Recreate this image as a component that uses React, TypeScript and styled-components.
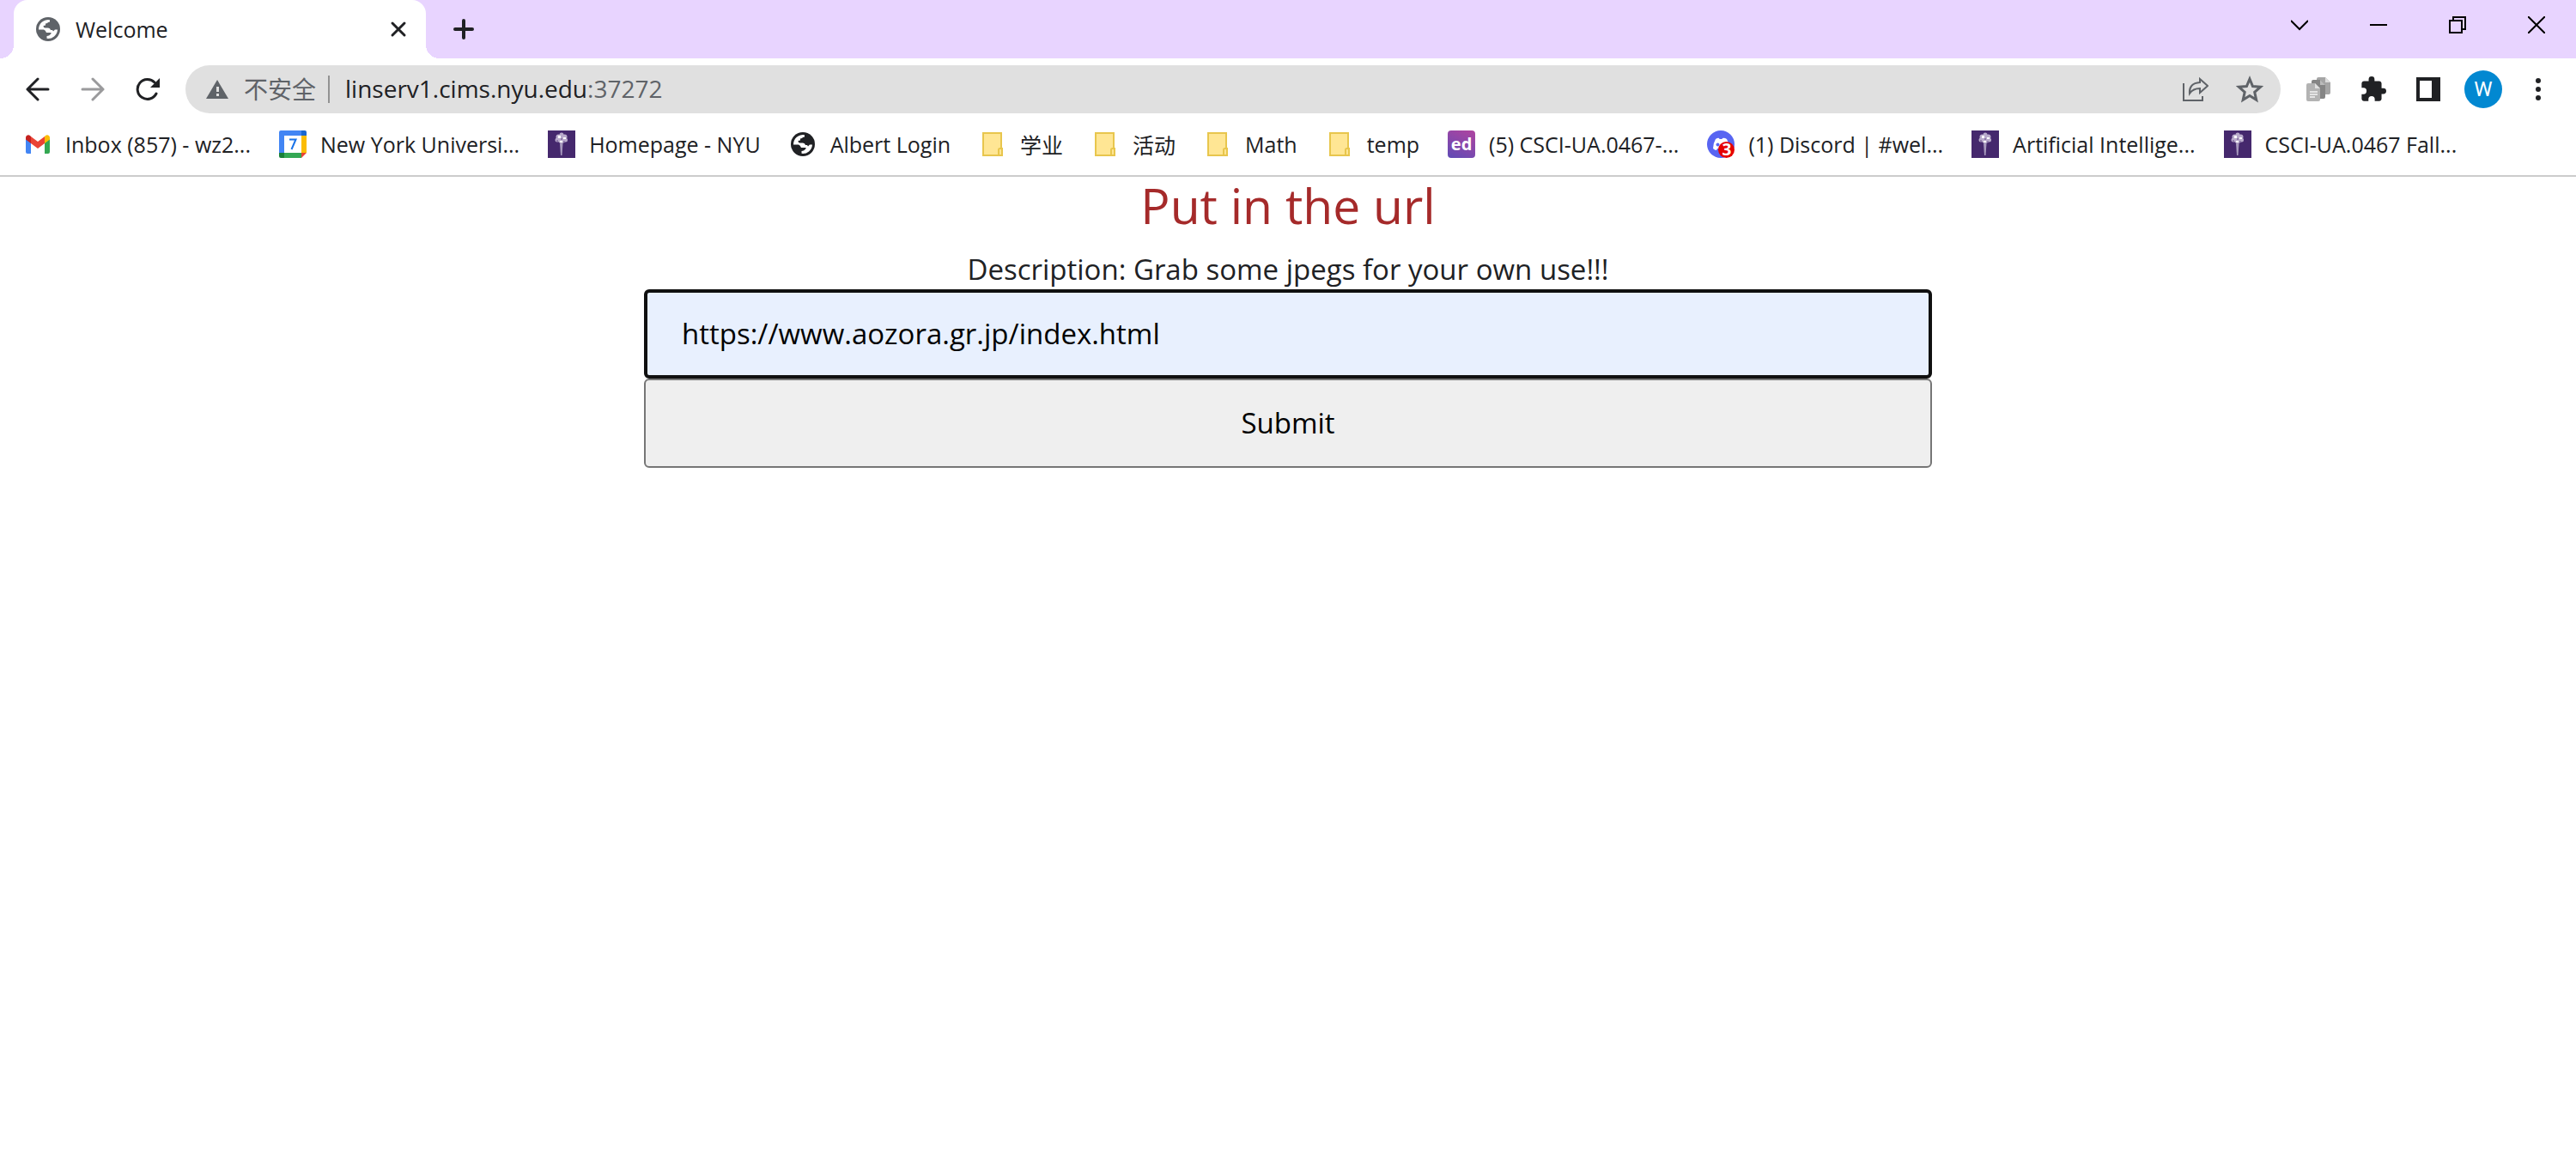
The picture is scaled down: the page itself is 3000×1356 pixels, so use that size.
import React, { useState } from "react";
import styled, { createGlobalStyle } from "styled-components";

const INK = "#202124";
const MUTED = "#5f6368";

const GlobalStyle = createGlobalStyle`
  *, *::before, *::after { box-sizing: border-box; }
  body {
    margin: 0;
    background: #fff;
    color: ${INK};
    font-family: "Open Sans", "Noto Sans CJK SC", sans-serif;
  }
  button, input { font: inherit; color: inherit; }
  svg { display: block; flex: none; }
`;

const TabStrip = styled.header`
  display: flex;
  height: 68px;
  padding-left: 16px;
  background: #e8d4ff;
`;

const Tab = styled.div`
  position: relative;
  display: flex;
  align-items: center;
  gap: 16px;
  width: 480px;
  padding: 0 22px 0 24px;
  border-radius: 16px 16px 0 0;
  background: #fff;
  font-size: 25px;

  &::before, &::after {
    content: "";
    position: absolute;
    bottom: 0;
    width: 16px;
    height: 16px;
  }
  &::before {
    right: 100%;
    background: radial-gradient(circle at 0 0, transparent 16px, #fff 16px);
  }
  &::after {
    left: 100%;
    background: radial-gradient(circle at 100% 0, transparent 16px, #fff 16px);
  }
`;

const TabTitle = styled.span`
  flex: 1;
`;

const PlainButton = styled.button`
  display: flex;
  align-items: center;
  justify-content: center;
  padding: 0;
  border: 0;
  background: none;
`;

const NewTab = styled(PlainButton)`
  width: 56px;
  margin-left: 16px;
`;

const WindowControls = styled.div`
  display: flex;
  margin-left: auto;
`;

const WindowButton = styled(PlainButton)`
  width: 92px;
  padding-bottom: 10px;
`;

const Toolbar = styled.nav`
  display: flex;
  align-items: center;
  height: 72px;
  padding: 0 12px;
`;

const NavButton = styled(PlainButton)`
  width: 64px;
  height: 56px;
`;

const AddressBar = styled.div`
  display: flex;
  flex: 1;
  align-items: center;
  height: 56px;
  margin: 0 12px;
  padding: 0 4px 0 24px;
  border-radius: 28px;
  background: #e0e0e0;
`;

const Security = styled(PlainButton)`
  gap: 18px;
  padding-right: 14px;
  border-right: 2px solid #929292;
  color: ${MUTED};
  font-size: 28px;
  line-height: 32px;
`;

const Address = styled.div`
  flex: 1;
  padding: 0 0 2px 18px;
  font-size: 28px;
`;

const Port = styled.span`
  color: ${MUTED};
`;

const Avatar = styled.span`
  display: flex;
  align-items: center;
  justify-content: center;
  width: 44px;
  height: 44px;
  border-radius: 50%;
  background: #0288d1;
  color: #fff;
  font: 24px Roboto, sans-serif;
`;

const Bookmarks = styled.nav`
  display: flex;
  gap: 33px;
  height: 66px;
  padding: 0 28px 8px;
  border-bottom: 2px solid #ccc;
`;

const Bookmark = styled.a`
  display: flex;
  align-items: center;
  gap: 16px;
  color: inherit;
  font-size: 25px;
  text-decoration: none;
  white-space: nowrap;
`;

const Page = styled.main`
  text-align: center;
`;

const Title = styled.h1`
  margin: 0;
  color: #a52a2a;
  font-size: 57px;
  font-weight: 400;
  line-height: 66px;
`;

const Form = styled.form`
  display: flex;
  flex-direction: column;
  width: 50%;
  margin: 0 auto;
  font-size: 33px;
`;

const Description = styled.label`
  padding-top: 18px;
  line-height: 47px;
`;

const UrlInput = styled.input`
  height: 104px;
  padding: 0 40px 2px;
  border: 4px solid #101010;
  border-radius: 6px;
  outline: none;
  background: #e8f0fe;
  color: #000;
`;

const Submit = styled.button`
  height: 104px;
  padding: 0 0 2px;
  border: 2px solid #767676;
  border-radius: 6px;
  background: #efefef;
  color: #000;
`;

const Globe = ({ color }: { color: string }) => (
  <svg width="32" height="32" viewBox="0 0 32 32">
    <circle cx="16" cy="16" r="14" fill={color} />
    <path fill="#fff" d="M5 16.500A11 11 0 0 1 18 5.200V7.500Q15.500 7.500 15 9L13 9.500V11.500L10.500 12Q10.500 14.500 12.500 14.500H16Q18.500 14.500 19 17H21L22 18.500L24 16.500H27A11 11 0 0 1 14.500 26.800V24Q17.500 24 20 20.500L18.500 20H14Q13 17 11 16.500Z" />
  </svg>
);

const Gmail = () => (
  <svg width="32" height="32" viewBox="0 0 32 32">
    <path d="M2 9v16a2 2 0 0 0 2 2h4V12z" fill="#4285f4" />
    <path d="M24 12v15h4a2 2 0 0 0 2-2V9z" fill="#34a853" />
    <path d="M24 7v8l6-4.500V8a3 3 0 0 0-5-2z" fill="#fbbc04" />
    <path d="M8 15V7l8 6 8-6v8l-8 6z" fill="#ea4335" />
    <path d="M2 8v2.500L8 15V7L7 6a3 3 0 0 0-5 2z" fill="#c5221f" />
  </svg>
);

const Calendar = () => (
  <svg width="32" height="32" viewBox="0 0 32 32">
    <path d="M2 0h24v6H6v20H0V2a2 2 0 0 1 2-2z" fill="#4285f4" />
    <path d="M26 0h4a2 2 0 0 1 2 2v4h-6z" fill="#1967d2" />
    <path d="M26 6h6v20h-6z" fill="#fbbc04" />
    <path d="M6 26h20v6H6z" fill="#34a853" />
    <path d="M0 26h6v6H2a2 2 0 0 1-2-2z" fill="#188038" />
    <path d="M26 26h6l-6 6z" fill="#ea4335" />
    <path d="M6 6h20v20H6z" fill="#fff" />
    <path d="M12 10.500h7.500L14.500 22" fill="none" stroke="#1a73e8" strokeWidth="2" />
  </svg>
);

const Torch = () => (
  <svg width="32" height="32" viewBox="0 0 32 32">
    <path d="M0 0h32v32H0z" fill="#45286d" />
    <path d="M14 15h3.500l-1 14h-1.500z" fill="#a799bd" />
    <g fill="#b9abcb">
      <circle cx="16" cy="5" r="2.500" />
      <circle cx="12.500" cy="7.500" r="3" />
      <circle cx="19.500" cy="7.500" r="3" />
      <circle cx="11" cy="11" r="2.500" />
      <circle cx="20.500" cy="11" r="2.500" />
      <circle cx="16" cy="11" r="4" />
    </g>
    <path d="M12 6h3v3h-3zM18 8h3v2h-3zM14 12h3v2h-3z" fill="#fff" />
    <path d="M15 9h2v2h-2zM10 11h2v2h-2zM18 12h2v2h-2z" fill="#8e7aa9" />
  </svg>
);

const Folder = () => (
  <svg width="32" height="32" viewBox="0 0 32 32">
    <path d="M5 3h21v18h1v8H5z" fill="#ffe694" stroke="#e8c64d" strokeWidth="2" />
    <rect x="23" y="21" width="4" height="8" rx="1.500" fill="#ffe694" stroke="#e8c64d" strokeWidth="2" />
  </svg>
);

const EdBadge = styled.span`
  display: flex;
  align-items: center;
  justify-content: center;
  width: 32px;
  height: 32px;
  border-radius: 4px;
  background: linear-gradient(25deg, #5f4bb6, #b0449f);
  color: #fff;
  font-size: 20px;
  font-weight: 700;
  line-height: 32px;
`;

const DiscordMark = styled.span`
  position: relative;
  width: 32px;
  height: 32px;
`;

const Unread = styled.span`
  position: absolute;
  right: 0;
  bottom: 0;
  width: 19px;
  height: 19px;
  border-radius: 50%;
  background: #e60000;
  color: #fff;
  font-size: 19px;
  font-weight: 700;
  line-height: 19px;
  text-align: center;
`;

const Discord = () => (
  <DiscordMark>
    <svg width="32" height="32" viewBox="0 0 32 32">
      <circle cx="16" cy="16" r="16" fill="#5865f2" />
      <path d="M10 10q3-2 4-1l.5 1h3l.5-1q2-1 5 1 3 5 3 11-2 2-4 2l-1-2h-9l-1 2q-2 0-4-2 0-6 3-11z" fill="#fff" />
      <circle cx="12.500" cy="16.500" r="2" fill="#5865f2" />
      <circle cx="19.500" cy="16.500" r="2" fill="#5865f2" />
    </svg>
    <Unread>3</Unread>
  </DiscordMark>
);

const bookmarks: { label: string; icon: React.ReactNode }[] = [
  { label: "Inbox (857) - wz2...", icon: <Gmail /> },
  { label: "New York Universi...", icon: <Calendar /> },
  { label: "Homepage - NYU", icon: <Torch /> },
  { label: "Albert Login", icon: <Globe color={INK} /> },
  { label: "学业", icon: <Folder /> },
  { label: "活动", icon: <Folder /> },
  { label: "Math", icon: <Folder /> },
  { label: "temp", icon: <Folder /> },
  { label: "(5) CSCI-UA.0467-...", icon: <EdBadge>ed</EdBadge> },
  { label: "(1) Discord | #wel...", icon: <Discord /> },
  { label: "Artificial Intellige...", icon: <Torch /> },
  { label: "CSCI-UA.0467 Fall...", icon: <Torch /> },
];

export default function App() {
  const [url, setUrl] = useState("https://www.aozora.gr.jp/index.html");
  return (
    <>
      <GlobalStyle />
      <TabStrip>
        <Tab>
          <Globe color={MUTED} />
          <TabTitle>Welcome</TabTitle>
          <PlainButton aria-label="Close tab">
            <svg width="20" height="20" viewBox="0 0 20 20" stroke={INK} strokeWidth="3" strokeLinecap="round"><path d="M3 3l14 14M17 3L3 17" /></svg>
          </PlainButton>
        </Tab>
        <NewTab aria-label="New tab">
          <svg width="24" height="24" viewBox="0 0 24 24" stroke={INK} strokeWidth="4" strokeLinecap="round"><path d="M12 2v20M2 12h20" /></svg>
        </NewTab>
        <WindowControls>
          <WindowButton aria-label="Search tabs">
            <svg width="20" height="20" viewBox="0 0 20 20" fill="none" stroke="#000" strokeWidth="2"><path d="M0 5l10 10L20 5" /></svg>
          </WindowButton>
          <WindowButton aria-label="Minimize">
            <svg width="20" height="20" viewBox="0 0 20 20"><path d="M0 9h20v2H0z" /></svg>
          </WindowButton>
          <WindowButton aria-label="Restore">
            <svg width="20" height="20" viewBox="0 0 20 20" fill="none" stroke="#000" strokeWidth="2"><path d="M1 5h14v14H1zM5 5V1h14v14h-4" /></svg>
          </WindowButton>
          <WindowButton aria-label="Close">
            <svg width="20" height="20" viewBox="0 0 20 20" stroke="#000" strokeWidth="2"><path d="M0 0l20 20M20 0L0 20" /></svg>
          </WindowButton>
        </WindowControls>
      </TabStrip>

      <Toolbar aria-label="Toolbar">
        <NavButton aria-label="Back">
          <svg width="28" height="28" viewBox="0 0 28 28" fill="none" stroke={INK} strokeWidth="3" strokeLinecap="round" strokeLinejoin="round"><path d="M14 2L2 14l12 12M2 14h24" /></svg>
        </NavButton>
        <NavButton aria-label="Forward">
          <svg width="28" height="28" viewBox="0 0 28 28" fill="none" stroke="#9a9a9c" strokeWidth="3" strokeLinecap="round" strokeLinejoin="round"><path d="M14 2l12 12-12 12M26 14H2" /></svg>
        </NavButton>
        <NavButton aria-label="Reload">
          <svg width="28" height="28" viewBox="0 0 28 28" fill="none"><path d="M24 19a11.500 11.500 0 1 1-2-13" stroke={INK} strokeWidth="3" strokeLinecap="round" /><path d="M28 1v11H17z" fill={INK} /></svg>
        </NavButton>
        <AddressBar>
          <Security>
            <svg width="26" height="22" viewBox="0 0 26 22"><path d="M13 0l13 22H0z" fill={MUTED} /><path d="M12 8h3v6h-3zM12 16h3v3h-3z" fill="#e0e0e0" /></svg>
            不安全
          </Security>
          <Address>linserv1.cims.nyu.edu<Port>:37272</Port></Address>
          <NavButton aria-label="Share">
            <svg width="32" height="32" viewBox="0 0 32 32" fill="none" stroke={MUTED} strokeWidth="2"><path d="M3 9v20h22v-5" /><path d="M22 4l9 8-9 8v-5q-8 0-12 6-1-12 12-13z" /></svg>
          </NavButton>
          <NavButton aria-label="Bookmark this page">
            <svg width="32" height="32" viewBox="0 0 32 32" fill="none" stroke={MUTED} strokeWidth="3"><path d="M16 4l3.500 8.500 9 .8-6.800 6 2 9L16 23.500 8.200 28.300l2-9-6.800-6 9-.8z" /></svg>
          </NavButton>
        </AddressBar>
        <NavButton aria-label="Copy all links">
          <svg width="28" height="28" viewBox="0 0 28 28"><path d="M12 2a2 2 0 0 1 2-2h8l6 6v12a2 2 0 0 1-2 2H12z" fill="#a5a5a5" /><path d="M22 0v6h6z" fill="#ddd" /><path d="M6 5a2 2 0 0 1 2-2h8l6 6v14a2 2 0 0 1-2 2H6z" fill="#858585" /><path d="M16 3v6h6z" fill="#bbb" /><path d="M0 9a2 2 0 0 1 2-2h8l6 6v13a2 2 0 0 1-2 2H2a2 2 0 0 1-2-2z" fill="#b3b3b3" /><path d="M10 7v6h6z" fill="#e0e0e0" /><path d="M4 17h9M4 20h9M4 23h6" stroke="#f5f5f5" strokeWidth="1.500" /></svg>
        </NavButton>
        <NavButton aria-label="Extensions">
          <svg width="30" height="30" viewBox="1 1 22 22"><path fill={INK} d="M20.500 11H19V7c0-1.100-.9-2-2-2h-4V3.500a2.500 2.500 0 0 0-5 0V5H4c-1.100 0-2 .9-2 2v3.800h1.500a2.700 2.700 0 0 1 0 5.400H2V20c0 1.100.9 2 2 2h3.800v-1.500a2.700 2.700 0 0 1 5.400 0V22H17c1.100 0 2-.9 2-2v-4h1.500a2.500 2.500 0 0 0 0-5z" /></svg>
        </NavButton>
        <NavButton aria-label="Side panel">
          <svg width="28" height="28" viewBox="0 0 28 28"><path d="M0 0h28v28H0zM4 4v20h14V4z" fill={INK} fillRule="evenodd" /></svg>
        </NavButton>
        <NavButton aria-label="Profile"><Avatar>W</Avatar></NavButton>
        <NavButton aria-label="Menu">
          <svg width="6" height="28" viewBox="0 0 6 28" fill={INK}><circle cx="3" cy="4" r="3" /><circle cx="3" cy="14" r="3" /><circle cx="3" cy="24" r="3" /></svg>
        </NavButton>
      </Toolbar>

      <Bookmarks aria-label="Bookmarks">
        {bookmarks.map((b) => (
          <Bookmark href="#" key={b.label}>{b.icon}<span>{b.label}</span></Bookmark>
        ))}
      </Bookmarks>

      <Page>
        <Title>Put in the url</Title>
        <Form onSubmit={(e) => e.preventDefault()}>
          <Description htmlFor="url">Description: Grab some jpegs for your own use!!!</Description>
          <UrlInput id="url" type="text" value={url} onChange={(e) => setUrl(e.target.value)} />
          <Submit type="submit">Submit</Submit>
        </Form>
      </Page>
    </>
  );
}
